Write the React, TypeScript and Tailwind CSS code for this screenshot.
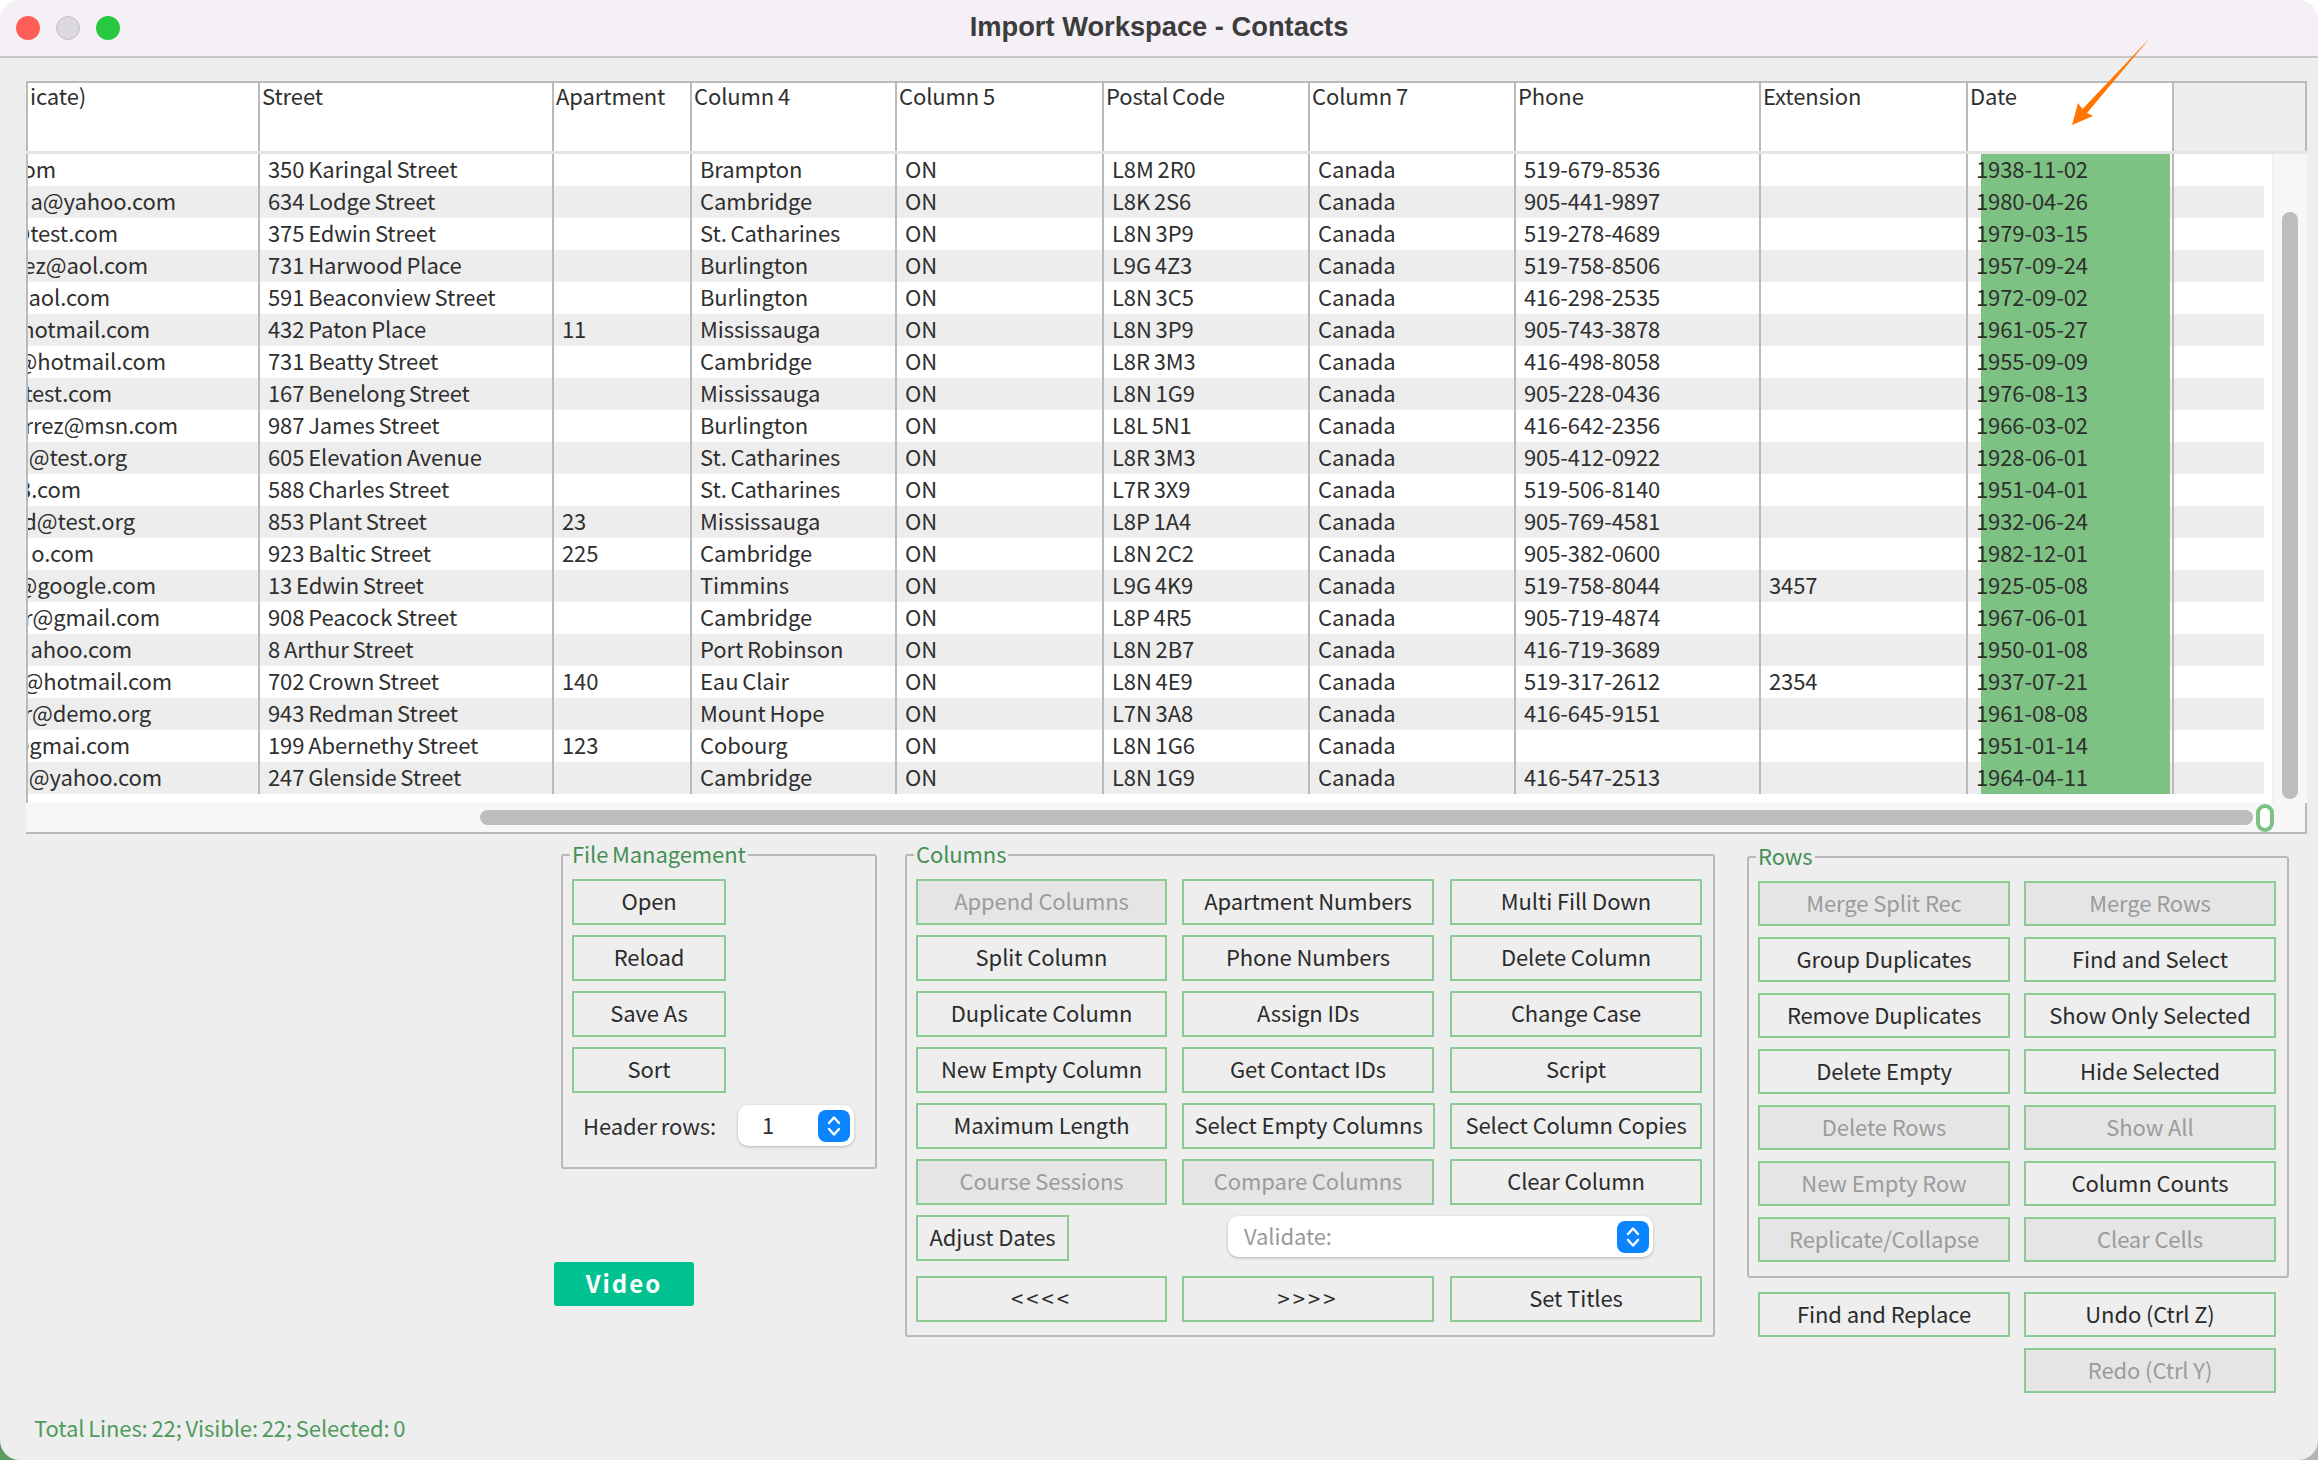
import { ReactNode } from "react"

type Row = {
  email: string
  emailEnd: number
  street: string
  apt: string
  city: string
  postal: string
  phone: string
  ext: string
  date: string
}

const r = (
  email: string,
  emailEnd: number,
  street: string,
  apt: string,
  city: string,
  postal: string,
  phone: string,
  ext: string,
  date: string,
): Row => ({ email, emailEnd, street, apt, city, postal, phone, ext, date })

const rows: Row[] = [
  r("com", 57, "350 Karingal Street", "", "Brampton", "L8M 2R0", "519-679-8536", "", "1938-11-02"),
  r("a@yahoo.com", 177, "634 Lodge Street", "", "Cambridge", "L8K 2S6", "905-441-9897", "", "1980-04-26"),
  r("@test.com", 119, "375 Edwin Street", "", "St. Catharines", "L8N 3P9", "519-278-4689", "", "1979-03-15"),
  r("ez@aol.com", 149, "731 Harwood Place", "", "Burlington", "L9G 4Z3", "519-758-8506", "", "1957-09-24"),
  r("@aol.com", 111, "591 Beaconview Street", "", "Burlington", "L8N 3C5", "416-298-2535", "", "1972-09-02"),
  r("hotmail.com", 151, "432 Paton Place", "11", "Mississauga", "L8N 3P9", "905-743-3878", "", "1961-05-27"),
  r("@hotmail.com", 167, "731 Beatty Street", "", "Cambridge", "L8R 3M3", "416-498-8058", "", "1955-09-09"),
  r("@test.com", 113, "167 Benelong Street", "", "Mississauga", "L8N 1G9", "905-228-0436", "", "1976-08-13"),
  r("rrez@msn.com", 179, "987 James Street", "", "Burlington", "L8L 5N1", "416-642-2356", "", "1966-03-02"),
  r("@test.org", 128, "605 Elevation Avenue", "", "St. Catharines", "L8R 3M3", "905-412-0922", "", "1928-06-01"),
  r("3.com", 82, "588 Charles Street", "", "St. Catharines", "L7R 3X9", "519-506-8140", "", "1951-04-01"),
  r("d@test.org", 136, "853 Plant Street", "23", "Mississauga", "L8P 1A4", "905-769-4581", "", "1932-06-24"),
  r("o.com", 95, "923 Baltic Street", "225", "Cambridge", "L8N 2C2", "905-382-0600", "", "1982-12-01"),
  r("@google.com", 157, "13 Edwin Street", "", "Timmins", "L9G 4K9", "519-758-8044", "3457", "1925-05-08"),
  r("r@gmail.com", 161, "908 Peacock Street", "", "Cambridge", "L8P 4R5", "905-719-4874", "", "1967-06-01"),
  r("ahoo.com", 133, "8 Arthur Street", "", "Port Robinson", "L8N 2B7", "416-719-3689", "", "1950-01-08"),
  r("@hotmail.com", 173, "702 Crown Street", "140", "Eau Clair", "L8N 4E9", "519-317-2612", "2354", "1937-07-21"),
  r("r@demo.org", 152, "943 Redman Street", "", "Mount Hope", "L7N 3A8", "416-645-9151", "", "1961-08-08"),
  r("@gmai.com", 131, "199 Abernethy Street", "123", "Cobourg", "L8N 1G6", "", "", "1951-01-14"),
  r("@yahoo.com", 163, "247 Glenside Street", "", "Cambridge", "L8N 1G9", "416-547-2513", "", "1964-04-11"),
]

const headers = ["icate)", "Street", "Apartment", "Column 4", "Column 5", "Postal Code", "Column 7", "Phone", "Extension", "Date"]

const headGrid = "grid grid-cols-[232px_294px_138px_205px_207px_206px_206px_245px_207px_206px_130px]"
const rowGrid = "grid grid-cols-[232px_294px_138px_205px_207px_206px_206px_245px_207px_206px_89px] grid-rows-[32px]"
const sep = "border-r-2 border-[#bababa]"

function Cell({ children }: { children?: ReactNode }) {
  return <div className={`${sep} pl-[8px] pb-[5px] flex items-center whitespace-nowrap`}>{children}</div>
}

function Btn({ label, off, className = "" }: { label: string; off?: boolean; className?: string }) {
  return (
    <button
      className={`border-2 border-[#8ccb94] pb-[3px] flex items-center justify-center whitespace-nowrap ${
        off ? "bg-[#e5e5e5] text-[#9b9b9b]" : "text-[#2b2b2b]"
      } ${className}`}
    >
      {label}
    </button>
  )
}

function Group({ title, className, children }: { title: string; className: string; children: ReactNode }) {
  return (
    <fieldset className={`border-2 border-[#b9b9b9] rounded-[3px] ${className}`}>
      <legend className="-ml-[2px] px-[2px] pb-[3px] leading-[21px] text-[#468f55]">{title}</legend>
      {children}
    </fieldset>
  )
}

function Stepper() {
  return (
    <span className="w-[32px] h-[32px] rounded-[8px] bg-[#0a84ff] flex items-center justify-center">
      <svg width="20" height="26" viewBox="0 0 20 26" fill="none" stroke="white" strokeWidth="2.4" strokeLinecap="round" strokeLinejoin="round">
        <path d="M5 10 10 4.5 15 10" />
        <path d="M5 16 10 21.5 15 16" />
      </svg>
    </span>
  )
}

export default function App() {
  return (
    <div className="relative w-[2318px] h-[1460px] bg-white overflow-hidden font-['Noto_Sans_CJK_SC','Liberation_Sans',sans-serif] text-[22px] text-[#2f2f2f] tracking-[-0.1px] [word-spacing:-1px]">
      <span className="absolute left-0 bottom-0 w-[24px] h-[24px] bg-[#5e9c63]" />
      <span className="absolute right-0 bottom-0 w-[24px] h-[24px] bg-[#b4b4b4]" />
      <div className="relative w-full h-full bg-[#eeeeee] rounded-[20px] overflow-hidden flex flex-col">
        {/* title bar */}
        <div className="relative h-[58px] shrink-0 bg-[#f4f0f6] border-b-2 border-[#c8c8c8] pb-[2px] flex items-center justify-center">
          <div className="absolute left-[16px] top-[16px] flex gap-[16px]">
            <span className="w-[24px] h-[24px] rounded-full bg-[#ff5f57]" />
            <span className="w-[24px] h-[24px] rounded-full bg-[#dcd9de] border border-[#c4c1c6]" />
            <span className="w-[24px] h-[24px] rounded-full bg-[#28c840]" />
          </div>
          <span className="font-['Liberation_Sans',sans-serif] font-bold text-[27.3px] text-[#3c3c3c] tracking-normal [word-spacing:0]">Import Workspace - Contacts</span>
        </div>

        {/* table */}
        <div className="relative ml-[26px] mt-[23px] w-[2281px] shrink-0">
          <div className={`${headGrid} h-[70px] border-t-2 border-l-2 border-r-2 border-[#bababa] leading-[25px]`}>
            {headers.map((h) => (
              <div key={h} className={`${sep} bg-white pl-[2px] whitespace-nowrap`}>
                {h}
              </div>
            ))}
            <div className="bg-[#eeeeee]" />
          </div>
          <div className="h-[3px] bg-[#e4e4e4]" />
          <div className="flex h-[649px]">
            <div className="w-[2246px] border-l-2 border-[#bababa] bg-white pr-[8px] leading-[26px]">
              {rows.map((row, i) => (
                <div key={row.street} className={`${rowGrid} ${i % 2 ? "bg-[#ededed]" : ""}`}>
                  <div className={`${sep} pb-[5px] flex items-center justify-end overflow-hidden whitespace-nowrap`} style={{ paddingRight: 259 - row.emailEnd }}>
                    <span className="shrink-0">{row.email}</span>
                  </div>
                  <Cell>{row.street}</Cell>
                  <Cell>{row.apt}</Cell>
                  <Cell>{row.city}</Cell>
                  <Cell>ON</Cell>
                  <Cell>{row.postal}</Cell>
                  <Cell>Canada</Cell>
                  <Cell>{row.phone}</Cell>
                  <Cell>{row.ext}</Cell>
                  <div className={`${sep} pl-[13px]`}>
                    <div className="h-full mr-[2px] pb-[5px] bg-[#7dc283] flex items-center whitespace-nowrap">
                      <span className="-ml-[5px]">{row.date}</span>
                    </div>
                  </div>
                  <div />
                </div>
              ))}
            </div>
            <div className="flex-1 bg-[#f7f7f7] border-l-2 border-[#f0f0f0] pl-[8px] pt-[58px]">
              <div className="w-[16px] h-[587px] rounded-full bg-[#bdbdbd]" />
            </div>
          </div>
          <div className="h-[31px] bg-[#f7f7f7] border-b-2 border-r-2 border-[#bababa] flex items-center pl-[454px]">
            <div className="w-[1773px] h-[15px] rounded-full bg-[#bdbdbd]" />
            <div className="ml-[3px] w-[18px] h-[28px] rounded-full border-[4px] border-[#7dc283] bg-white" />
          </div>
          <svg className="absolute left-[2000px] top-[-50px]" width="140" height="110" viewBox="0 0 140 110">
            <path d="M124 7 61 82 67 85 46 94 52 72 56.5 78Z" fill="#ff7700" />
          </svg>
        </div>

        {/* panels */}
        <div className="flex pl-[554px] mt-[9px]">
          <div className="w-[351px] shrink-0">
            <Group title="File Management" className="ml-[7px] w-[316px] h-[326px] pl-[9px]">
              <div className="flex flex-col gap-[10px] w-[154px] pt-[12px]">
                <Btn label="Open" className="h-[46px]" />
                <Btn label="Reload" className="h-[46px]" />
                <Btn label="Save As" className="h-[46px]" />
                <Btn label="Sort" className="h-[46px]" />
              </div>
              <div className="flex items-center mt-[12px] pl-[11px]">
                <span className="w-[155px] pb-[1px]">Header rows:</span>
                <div className="w-[116px] h-[41px] rounded-[10px] bg-white shadow-[0_1px_3px_rgba(0,0,0,0.25)] flex items-center justify-between pl-[24px] pr-[4px]">
                  <span className="pb-[3px]">1</span>
                  <Stepper />
                </div>
              </div>
            </Group>
            <button className="mt-[93px] w-[140px] h-[44px] pb-[3px] rounded-[3px] bg-[#00c190] text-white font-bold tracking-[2px] text-[24px] flex items-center justify-center">Video</button>
          </div>

          <Group title="Columns" className="w-[810px] h-[494px] pl-[9px] shrink-0">
            <div className="grid grid-cols-[251px_253px_252px] gap-x-[15px] gap-y-[10px] auto-rows-[46px] pt-[12px]">
              <Btn label="Append Columns" off />
              <Btn label="Apartment Numbers" className="w-[252px]" />
              <Btn label="Multi Fill Down" />
              <Btn label="Split Column" />
              <Btn label="Phone Numbers" className="w-[252px]" />
              <Btn label="Delete Column" />
              <Btn label="Duplicate Column" />
              <Btn label="Assign IDs" className="w-[252px]" />
              <Btn label="Change Case" />
              <Btn label="New Empty Column" />
              <Btn label="Get Contact IDs" className="w-[252px]" />
              <Btn label="Script" />
              <Btn label="Maximum Length" />
              <Btn label="Select Empty Columns" />
              <Btn label="Select Column Copies" />
              <Btn label="Course Sessions" off />
              <Btn label="Compare Columns" off className="w-[252px]" />
              <Btn label="Clear Column" />
              <Btn label="Adjust Dates" className="w-[153px]" />
              <div className="col-span-2 pl-[46px] pt-[1px]">
                <div className="w-[425px] h-[41px] rounded-[10px] bg-white shadow-[0_1px_3px_rgba(0,0,0,0.25)] flex items-center justify-between pl-[16px] pr-[4px] text-[#999999]">
                  <span className="pb-[3px]">Validate:</span>
                  <Stepper />
                </div>
              </div>
            </div>
            <div className="grid grid-cols-[251px_253px_252px] gap-x-[15px] h-[46px] mt-[15px]">
              <Btn label="<<<<" className="tracking-[3px]" />
              <Btn label=">>>>" className="w-[252px] tracking-[3px]" />
              <Btn label="Set Titles" />
            </div>
          </Group>

          <div className="ml-[32px] w-[542px] shrink-0 pt-[2px]">
            <Group title="Rows" className="h-[433px] pl-[9px]">
              <div className="grid grid-cols-[252px_252px] gap-x-[14px] gap-y-[11px] auto-rows-[45px] pt-[12px]">
                <Btn label="Merge Split Rec" off />
                <Btn label="Merge Rows" off />
                <Btn label="Group Duplicates" />
                <Btn label="Find and Select" />
                <Btn label="Remove Duplicates" />
                <Btn label="Show Only Selected" />
                <Btn label="Delete Empty" />
                <Btn label="Hide Selected" />
                <Btn label="Delete Rows" off />
                <Btn label="Show All" off />
                <Btn label="New Empty Row" off />
                <Btn label="Column Counts" />
                <Btn label="Replicate/Collapse" off />
                <Btn label="Clear Cells" off />
              </div>
            </Group>
            <div className="grid grid-cols-[252px_252px] gap-x-[14px] gap-y-[11px] auto-rows-[45px] mt-[14px] ml-[11px]">
              <Btn label="Find and Replace" />
              <Btn label="Undo (Ctrl Z)" />
              <div />
              <Btn label="Redo (Ctrl Y)" off />
            </div>
          </div>
        </div>

        <div className="mt-auto pl-[34px] pb-[18px] leading-[30px] text-[#4f9a5c] whitespace-nowrap">Total Lines: 22; Visible: 22; Selected: 0</div>
      </div>
    </div>
  )
}
